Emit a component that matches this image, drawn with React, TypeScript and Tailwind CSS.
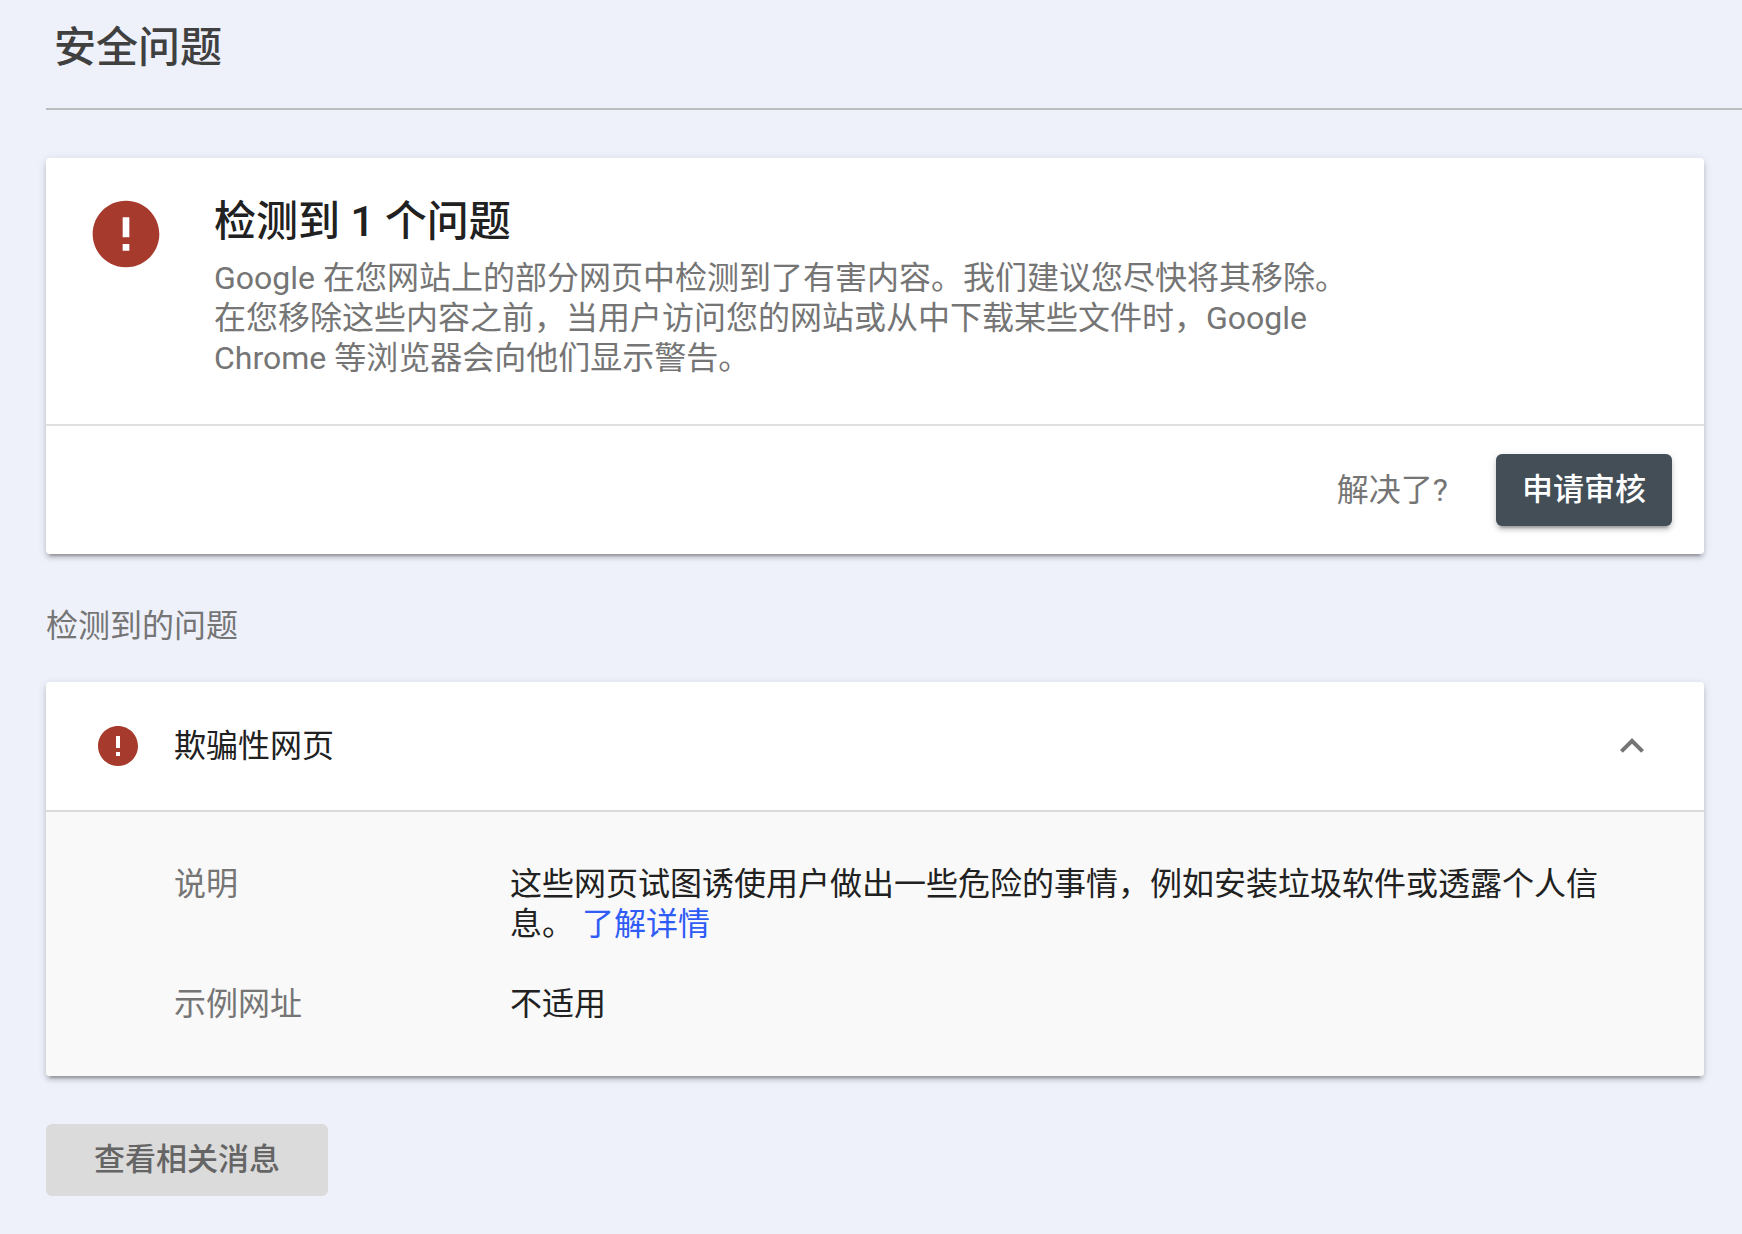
import React from 'react'

type IconProps = {
    className?: string
}

const ErrorIcon: React.FC<IconProps> = ({ className }) => (
    <svg viewBox="0 0 24 24" fill="currentColor" aria-hidden="true" className={className}>
        <path d="M12 2C6.48 2 2 6.48 2 12s4.48 10 10 10 10-4.48 10-10S17.52 2 12 2zm1 15h-2v-2h2v2zm0-4h-2V7h2v6z" />
    </svg>
)

const ExpandLessIcon: React.FC<IconProps> = ({ className }) => (
    <svg viewBox="0 0 24 24" fill="currentColor" aria-hidden="true" className={className}>
        <path d="M12 8l-6 6 1.41 1.41L12 10.83l4.59 4.58L18 14z" />
    </svg>
)

const Card: React.FC<{ children: React.ReactNode }> = ({ children }) => (
    <section className="mr-[38px] overflow-hidden rounded bg-white shadow-[0_6px_2px_-4px_rgba(0,0,0,0.2),0_4px_4px_rgba(0,0,0,0.14),0_2px_10px_rgba(0,0,0,0.12)]">
        {children}
    </section>
)

const App: React.FC = () => {
    const [open, setOpen] = React.useState(true)

    return (
        <div
            lang="zh-CN"
            className="min-h-screen bg-[#eef1fa] pb-9 pl-[46px] font-[Roboto,'Noto_Sans_CJK_SC',sans-serif] text-[32px] leading-10 text-[#212121]"
        >
            <header className="mb-12 border-b-2 border-[#babcbe] pt-5 pb-8 pl-2">
                <h1 className="text-[42px] leading-14 font-medium text-[#404040]">安全问题</h1>
            </header>

            <Card>
                <div className="flex items-start gap-12 border-b-2 border-[#e0e0e0] px-10 pt-9 pb-[46px]">
                    <ErrorIcon className="size-20 shrink-0 text-[#a53a2d]" />
                    <div className="max-w-[1140px]">
                        <h2 className="mb-2 text-[42px] leading-14 font-medium">检测到 1 个问题</h2>
                        <p className="text-[#757575]">
                            Google 在您网站上的部分网页中检测到了有害内容。我们建议您尽快将其移除。在您移除这些内容之前，当用户访问您的网站或从中下载某些文件时，Google
                            Chrome 等浏览器会向他们显示警告。
                        </p>
                    </div>
                </div>
                <div className="flex items-center justify-end gap-12 px-8 py-7">
                    <span className="text-[#757575]">解决了?</span>
                    <button
                        type="button"
                        className="h-18 rounded-md bg-[#434e57] px-[26px] text-[31px] font-medium text-white shadow-[0_6px_2px_-4px_rgba(0,0,0,0.2),0_4px_4px_rgba(0,0,0,0.14),0_2px_10px_rgba(0,0,0,0.12)]"
                    >
                        申请审核
                    </button>
                </div>
            </Card>

            <h3 className="pt-[52px] pb-9 text-[#757575]">检测到的问题</h3>

            <Card>
                <button
                    type="button"
                    aria-expanded={open}
                    onClick={() => setOpen(!open)}
                    className="flex w-full items-center gap-8 px-12 py-10 text-left"
                >
                    <ErrorIcon className="size-12 shrink-0 text-[#a53a2d]" />
                    <span className="grow">欺骗性网页</span>
                    <ExpandLessIcon className={open ? 'size-12 text-[#757575]' : 'size-12 rotate-180 text-[#757575]'} />
                </button>
                {open && (
                    <dl className="grid grid-cols-[336px_1fr] gap-y-10 border-t-2 border-[#dadada] bg-[#f9f9f9] py-[52px] pr-24 pl-32">
                        <dt className="text-[#757575]">说明</dt>
                        <dd>
                            这些网页试图诱使用户做出一些危险的事情，例如安装垃圾软件或透露个人信息。{' '}
                            <a href="#details" className="text-[#2f5cf6]">
                                了解详情
                            </a>
                        </dd>
                        <dt className="text-[#757575]">示例网址</dt>
                        <dd>不适用</dd>
                    </dl>
                )}
            </Card>

            <button
                type="button"
                className="mt-12 h-18 rounded-md bg-[#dbdbdb] px-12 text-[31px] font-medium text-[#656565]"
            >
                查看相关消息
            </button>
        </div>
    )
}

export default App
